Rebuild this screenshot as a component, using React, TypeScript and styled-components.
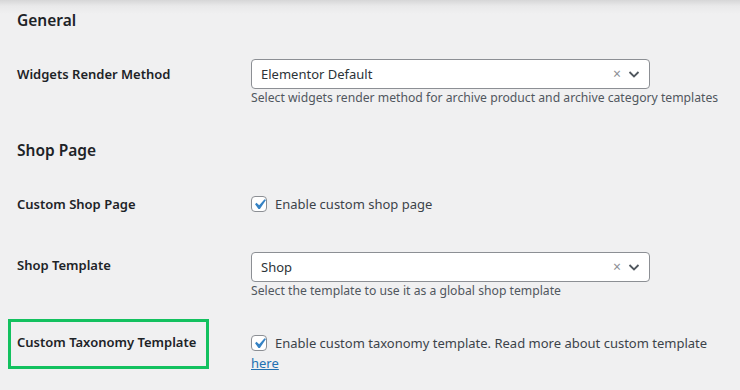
import React from "react";
import styled, { createGlobalStyle } from "styled-components";

const Global = createGlobalStyle`
  html, body { margin: 0; padding: 0; background: #f0f0f1; }
  body { font-family: "Noto Sans", "Open Sans", sans-serif; color: #3c434a; }
`;

const Page = styled.div`
  width: 740px;
  height: 390px;
  box-sizing: border-box;
  padding: 8px 0 0 8px;
  background: linear-gradient(#d6d6d7 0px, #e9e9ea 6px, #f0f0f1 14px);
  overflow: hidden;
`;

const Heading = styled.h2<{ $mt?: number }>`
  margin: ${(p) => p.$mt ?? 0}px 0 0;
  padding-left: 9px;
  font-size: 15.5px;
  line-height: 24px;
  font-weight: 600;
  color: #1d2327;
`;

const Row = styled.div<{ $mt: number }>`
  display: grid;
  grid-template-columns: 201px 1fr;
  column-gap: 42px;
  align-items: start;
  margin-top: ${(p) => p.$mt}px;
`;

const Label = styled.div<{ $highlight?: boolean; $pt?: number }>`
  box-sizing: border-box;
  height: 50px;
  padding: ${(p) => p.$pt ?? 11}px 6px 10px;
  border: 3px solid ${(p) => (p.$highlight ? "#13c15f" : "transparent")};
  font-size: 13px;
  line-height: 19px;
  font-weight: 600;
  color: #1d2327;
  white-space: nowrap;
`;

const Field = styled.div<{ $pt: number }>`
  padding-top: ${(p) => p.$pt}px;
  padding-right: 10px;
`;

const SelectBox = styled.div`
  box-sizing: border-box;
  width: 399px;
  height: 30px;
  display: flex;
  align-items: center;
  padding: 0 8px 0 9px;
  background: #fff;
  border: 1px solid #8c8f94;
  border-radius: 4px;
  font-size: 13px;
  color: #2c3338;
`;

const SelectValue = styled.span`
  flex: 1;
`;

const Clear = styled.span`
  font-size: 14px;
  color: #8c8f94;
  margin-right: 6px;
  line-height: 1;
`;

const Description = styled.p`
  margin: 0;
  font-size: 12.2px;
  line-height: 18px;
  color: #50575e;
  white-space: nowrap;
`;

const CheckLine = styled.label`
  display: flex;
  align-items: center;
  font-size: 13px;
  line-height: 20px;
  color: #3c434a;
  white-space: nowrap;
`;

const Box = styled.span`
  box-sizing: border-box;
  width: 16px;
  height: 16px;
  flex: none;
  margin-right: 8px;
  border: 1px solid #8c8f94;
  border-radius: 4px;
  background: #fff;
  display: flex;
  align-items: center;
  justify-content: center;
  overflow: visible;
`;

const Link = styled.a`
  display: block;
  font-size: 13px;
  line-height: 20px;
  color: #2271b1;
  text-decoration: underline;
`;

const Check = () => (
  <Box>
    <svg width="21" height="21" viewBox="0 0 20 20" style={{ flex: "none", margin: "-3px" }}>
      <path d="M14.83 4.89l1.34.94-5.81 8.38H9.02L5.78 9.67l1.34-1.25 2.57 2.4z" fill="#3582c4" />
    </svg>
  </Box>
);

const Chevron = () => (
  <svg width="14" height="14" viewBox="0 0 14 14">
    <path d="M2.5 5l4.5 4.5L11.5 5" fill="none" stroke="#50575e" strokeWidth="1.8" />
  </svg>
);

const Select = ({ value }: { value: string }) => (
  <SelectBox>
    <SelectValue>{value}</SelectValue>
    <Clear>×</Clear>
    <Chevron />
  </SelectBox>
);

export default function App() {
  return (
    <Page>
      <Global />
      <Heading>General</Heading>
      <Row $mt={19}>
        <Label>Widgets Render Method</Label>
        <Field $pt={8}>
          <Select value="Elementor Default" />
          <Description>
            Select widgets render method for archive product and archive category templates
          </Description>
        </Field>
      </Row>
      <Heading $mt={31}>Shop Page</Heading>
      <Row $mt={19}>
        <Label>Custom Shop Page</Label>
        <Field $pt={13}>
          <CheckLine>
            <Check />
            Enable custom shop page
          </CheckLine>
        </Field>
      </Row>
      <Row $mt={13}>
        <Label $pt={9}>Shop Template</Label>
        <Field $pt={8}>
          <Select value="Shop" />
          <Description>Select the template to use it as a global shop template</Description>
        </Field>
      </Row>
      <Row $mt={19}>
        <Label $highlight>Custom Taxonomy Template</Label>
        <Field $pt={14}>
          <CheckLine>
            <Check />
            Enable custom taxonomy template. Read more about custom template
          </CheckLine>
          <Link href="#">here</Link>
        </Field>
      </Row>
    </Page>
  );
}
